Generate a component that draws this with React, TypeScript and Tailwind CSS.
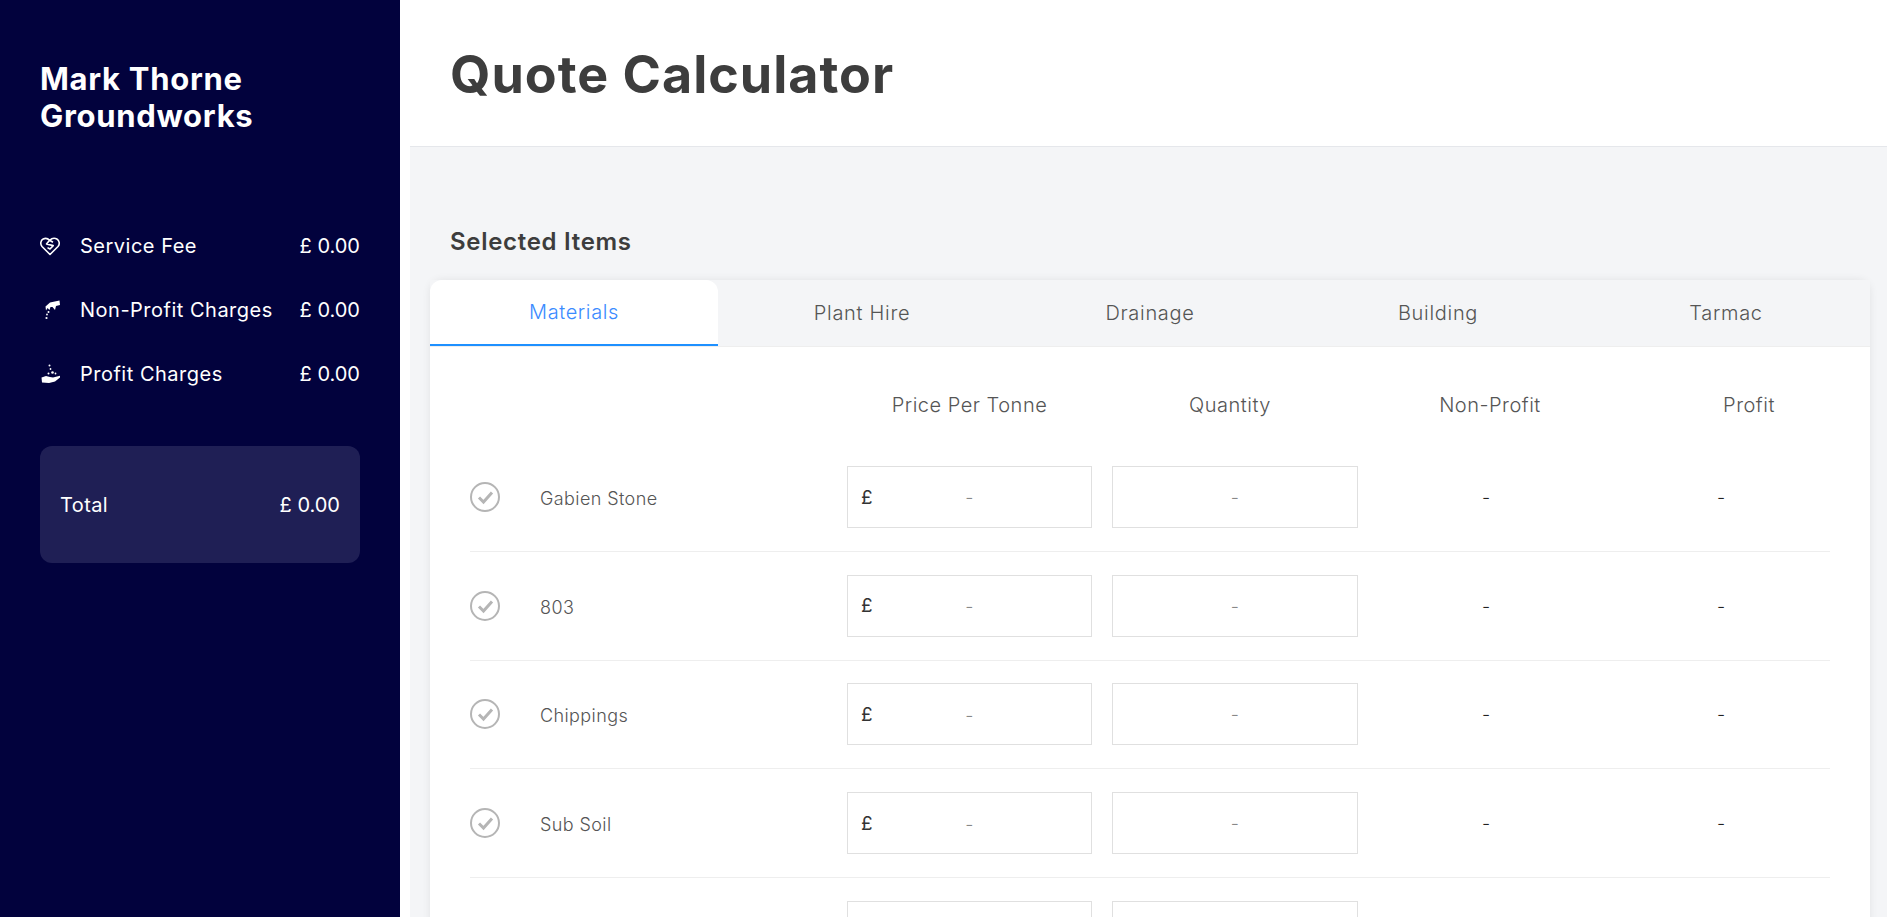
const tabs = ["Materials", "Plant Hire", "Drainage", "Building", "Tarmac"];
const items = ["Gabien Stone", "803", "Chippings", "Sub Soil", ""];

function HeartIcon() {
  return (
    <svg viewBox="0 0 20 20" className="h-5 w-5" fill="none" stroke="white" strokeWidth="1.6" strokeLinejoin="round">
      <path d="M10 18.5 L2 10.5 C0 8.3 0.6 4.3 3.2 3 C5.4 1.9 8 2.6 9.6 4.3 C11.6 2.4 14.8 1.9 16.9 3 C19.5 4.4 20 8.3 18 10.5 Z" />
      <path d="M13 6.3 L9.6 4.3 L6.5 8 L13.2 9.6 L10 13 L7.5 11.6" />
    </svg>
  );
}

function HandDown() {
  return (
    <svg viewBox="0 0 20 20" className="h-5 w-5" fill="white">
      <path d="M5.5 6.5 L10 2.5 L19.5 0.5 L20 5 L16 6 L15 10 L12.5 7 L10.5 7 L9.5 10 L7.5 8 L6 10.5 Z" />
      <circle cx="8.5" cy="12" r="1" />
      <circle cx="7" cy="14.5" r="0.9" />
      <circle cx="6.5" cy="18" r="1.1" />
    </svg>
  );
}

function HandUp() {
  return (
    <svg viewBox="0 0 20 20" className="h-5 w-5" fill="white">
      <path d="M1.5 13.5 L6 12 L10 13 L13 13.5 L20.5 11.5 L20 13.5 L15 17.5 L9 19 L2 18.5 Z" />
      <circle cx="9.5" cy="1.5" r="1" />
      <circle cx="10.5" cy="5" r="0.9" />
      <circle cx="12.5" cy="8.5" r="1.3" />
      <circle cx="8.5" cy="9.5" r="1" />
      <circle cx="15.5" cy="9.5" r="0.9" />
    </svg>
  );
}

function SummaryRow({ icon, label }: { icon: React.ReactNode; label: string }) {
  return (
    <div className="flex h-16 items-center text-[20px] tracking-[0.5px] text-white">
      <span className="flex w-10 shrink-0 items-center">{icon}</span>
      <span>{label}</span>
      <span className="ml-auto tracking-normal">£ 0.00</span>
    </div>
  );
}

function ItemRow({ name }: { name: string }) {
  const dash = name ? "-" : "";
  return (
    <div className="grid h-[108.75px] grid-cols-[70px_307px_245px_246px_1fr_1fr] items-center border-b border-[#eeeeee] text-[18px] font-light tracking-[0.4px] text-[#555555]">
      {name ? (
        <svg viewBox="0 0 30 30" className="h-[30px] w-[30px]" fill="none">
          <circle cx="15" cy="15" r="14" stroke="#b5b5b5" strokeWidth="2" />
          <path d="M9 15.5 L13.5 20 L22 10.5" stroke="#b5b5b5" strokeWidth="3" />
        </svg>
      ) : (
        <span />
      )}
      <span className="pt-[3px]">{name}</span>
      <div className="flex h-[62px] items-center border border-[#e0e0e0] px-[13px] pt-[2px]">
        <span className="text-[19px] font-normal text-[#333333]">{name ? "£" : ""}</span>
        <span className="flex-1 pr-[12px] text-center text-[#888888]">{dash}</span>
      </div>
      <div className="ml-5 flex h-[62px] w-[246px] items-center justify-center border border-[#e0e0e0] pt-[1px] text-[#888888]">
        {dash}
      </div>
      <span className="ml-[144px] pt-[1px] text-[#222222]">{dash}</span>
      <span className="ml-[133px] pt-[1px] text-[#222222]">{dash}</span>
    </div>
  );
}

export default function App() {
  return (
    <div className="flex h-[917px] overflow-hidden bg-white font-['Inter','Liberation_Sans',sans-serif]">
      <aside className="w-[400px] shrink-0 bg-[#02023d] px-10 pt-[60px]">
        <h1 className="text-[31px] leading-[37px] font-bold tracking-[0.7px] text-white">
          Mark Thorne
          <br />
          Groundworks
        </h1>
        <div className="mt-[80px]">
          <SummaryRow icon={<HeartIcon />} label="Service Fee" />
          <SummaryRow icon={<HandDown />} label="Non-Profit Charges" />
          <SummaryRow icon={<HandUp />} label="Profit Charges" />
        </div>
        <div className="mt-[40px] flex h-[117px] items-center justify-between rounded-xl bg-[#1f1f55] px-5 text-[20px] tracking-[0.4px] text-white">
          <span>Total</span>
          <span className="tracking-normal">£ 0.00</span>
        </div>
      </aside>
      <main className="flex min-w-0 flex-1 flex-col">
        <header className="flex h-[146px] shrink-0 items-center pt-[3px] pl-[50px]">
          <h2 className="text-[52px] font-bold tracking-[1px] text-[#3d3d3d]">Quote Calculator</h2>
        </header>
        <div className="ml-[10px] flex-1 border-t border-[#e5e7eb] bg-[#f4f5f7] pr-[17px] pl-5">
          <h3 className="mt-[81px] ml-5 text-[24px] leading-[28px] font-semibold tracking-[0.7px] text-[#3d3d3d]">
            Selected Items
          </h3>
          <section className="mt-[24px] rounded-t-xl bg-white shadow-[0_0_8px_rgba(0,0,0,0.08)]">
            <div className="grid grid-cols-5 border-b border-[#eeeeee] bg-[#f4f5f7]">
              {tabs.map((tab, i) => (
                <div
                  key={tab}
                  className={
                    i === 0
                      ? "flex h-[66px] items-center justify-center rounded-t-xl border-b-2 border-[#1e90ff] bg-white text-[20px] font-light tracking-[0.6px] text-[#3b8bff]"
                      : "flex h-[66px] items-center justify-center text-[20px] font-light tracking-[0.7px] text-[#555555]"
                  }
                >
                  {tab}
                </div>
              ))}
            </div>
            <div className="px-10">
              <div className="grid h-[96px] grid-cols-[377px_245px_20px_246px_1fr_1fr] items-center pt-[20px] text-[20px] font-light tracking-[0.5px] text-[#555555]">
                <span />
                <span className="text-center">Price Per Tonne</span>
                <span />
                <span className="mr-[10px] text-center">Quantity</span>
                <span className="ml-[28px] text-center">Non-Profit</span>
                <span className="ml-[74px] text-center">Profit</span>
              </div>
              {items.map((name, i) => (
                <ItemRow key={i} name={name} />
              ))}
            </div>
          </section>
        </div>
      </main>
    </div>
  );
}
